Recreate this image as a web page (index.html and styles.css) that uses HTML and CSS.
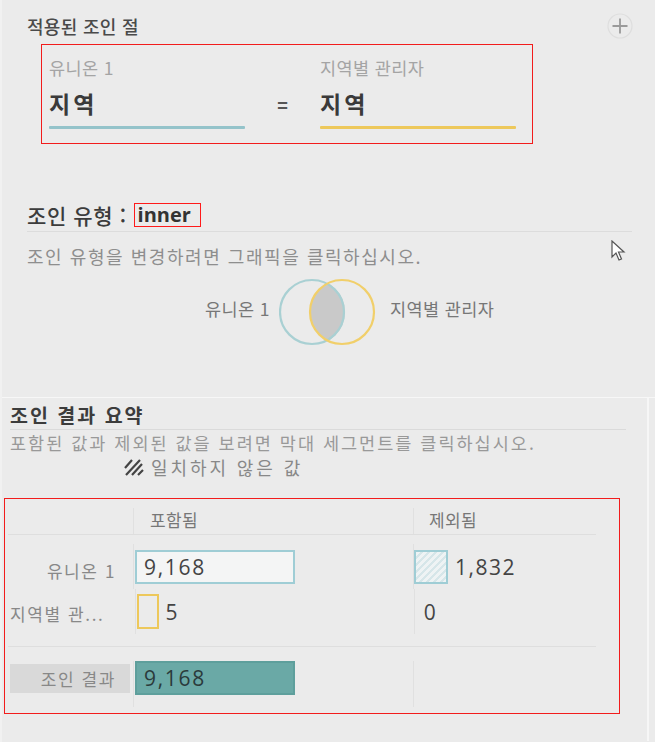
FILE: index.html
```html
<!DOCTYPE html>
<html lang="ko">
<head>
<meta charset="utf-8">
<link rel="stylesheet" href="styles.css">
</head>
<body>
<div class="page">
  <section class="top">
    <div class="title-row">
      <h1 class="title">적용된 조인 절</h1>
      <svg class="plus" width="26" height="26" viewBox="0 0 26 26"><circle cx="13" cy="13" r="12" fill="none" stroke="#dedede" stroke-width="1.2"/><path d="M13 5.5v15M5.5 13h15" stroke="#9a9a9a" stroke-width="1.8"/></svg>
    </div>
    <div class="clause">
      <div class="field">
        <div class="field-src">유니온 1</div>
        <div class="field-name">지역</div>
        <div class="field-line blue"></div>
      </div>
      <div class="eq">=</div>
      <div class="field">
        <div class="field-src">지역별 관리자</div>
        <div class="field-name">지역</div>
        <div class="field-line yellow"></div>
      </div>
    </div>
    <h2 class="jt"><span class="jt-label">조인 유형 :</span><span class="inner">inner</span></h2>
    <p class="hint">조인 유형을 변경하려면 그래픽을 클릭하십시오.</p>
    <div class="venn">
      <span class="venn-l">유니온 1</span>
      <svg width="100" height="70" viewBox="0 0 100 70">
        <defs><clipPath id="cl"><circle cx="33" cy="35" r="33"/></clipPath></defs>
        <circle cx="63" cy="35" r="32" fill="#c9c9c9" clip-path="url(#cl)"/>
        <circle cx="33" cy="35" r="32" fill="none" stroke="#a9d0d3" stroke-width="2.2"/>
        <circle cx="63" cy="35" r="32" fill="none" stroke="#f1cf6a" stroke-width="2.2"/>
      </svg>
      <span class="venn-r">지역별 관리자</span>
    </div>
    <svg class="cursor c1" width="16" height="22" viewBox="0 0 16 22"><path d="M1 1v16l4-4 3 7 2.5-1-3-7h5.5z" fill="#fff" stroke="#555" stroke-width="1.2"/></svg>
  </section>
  <section class="bottom">
    <h2 class="sum">조인 결과 요약</h2>
    <p class="hint2">포함된 값과 제외된 값을 보려면 막대 세그먼트를 클릭하십시오.</p>
    <div class="legend">
      <svg width="20" height="18" viewBox="0 0 20 18"><path d="M1 10l7-8M2 17l14-15M8 17l10-11M14 17l5-5" stroke="#444" stroke-width="2.2"/></svg>
      <span>일치하지 않은 값</span>
    </div>
    <div class="table">
      <div class="thead">
        <div class="c-lab"></div>
        <div class="c-inc">포함됨</div>
        <div class="c-exc">제외됨</div>
      </div>
      <div class="tbody">
        <div class="row">
          <div class="c-lab lab">유니온 1</div>
          <div class="c-inc"><div class="bar bar-blue">9,168</div></div>
          <div class="c-exc"><div class="sq hatch"></div><span class="num">1,832</span></div>
        </div>
        <div class="row">
          <div class="c-lab lab lab-left">지역별 관...</div>
          <div class="c-inc"><div class="sq-y"></div><span class="num">5</span></div>
          <div class="c-exc"><span class="num zero">0</span></div>
        </div>
      </div>
      <div class="tfoot">
        <div class="c-lab"><div class="res-lab">조인 결과</div></div>
        <div class="c-inc"><div class="bar bar-teal">9,168</div></div>
        <div class="c-exc"></div>
      </div>
    </div>
    <svg class="cursor c2" width="22" height="30" viewBox="0 0 16 22"><path d="M1 1v16l4-4 3 7 2.5-1-3-7h5.5z" fill="#fff" stroke="#333" stroke-width="1.3"/></svg>
    <svg class="cursor c3" width="13" height="17" viewBox="0 0 16 22"><path d="M1 1v16l4-4 3 7 2.5-1-3-7h5.5z" fill="#fff" stroke="#666" stroke-width="1.3"/></svg>
  </section>
</div>
</body>
</html>
```
FILE: styles.css
```css
* { box-sizing: border-box; }
html, body { margin: 0; padding: 0; }
body {
  background: #ebebeb;
  font-family: "Noto Sans CJK KR", "Noto Sans", sans-serif;
  color: #444;
  overflow: hidden;
}
.page { position: relative; width: 655px; height: 742px; overflow: hidden; border-left: 2px solid #f1f1f1; }
.top { position: relative; height: 398px; padding: 12px 22px 0 25px; border-bottom: 1px solid #f7f7f7; }
.title-row { display: flex; justify-content: space-between; align-items: center; height: 28px; }
.title { margin: 0; font-size: 18px; line-height: 26px; font-weight: 500; color: #4a4a4a; letter-spacing: 0.3px; }
.clause {
  margin: 4px 0 0 14px;
  width: 492px;
  height: 100px;
  border: 1px solid #f21c1c;
  display: flex;
  padding: 11px 0 0 7px;
}
.field { width: 196px; }
.field-src { font-size: 17.5px; line-height: 24px; color: #a4a4a4; letter-spacing: 0.4px; }
.field-name { margin-top: 9px; font-size: 23px; line-height: 28px; font-weight: 700; color: #3a3a3a; letter-spacing: 3px; }
.field-line { margin-top: 9px; height: 3px; border-radius: 1px; }
.blue { background: #94c3ca; }
.yellow { background: #edc85b; }
.eq { width: 75px; text-align: center; padding-top: 36px; font-size: 18px; line-height: 24px; font-weight: 700; color: #555; }
.jt { margin: 58px 0 0 0; font-size: 21px; line-height: 26px; font-weight: 500; color: #3c3c3c; padding-bottom: 3px; border-bottom: 1px solid #dcdcdc; width: 605px; display: flex; align-items: center; }
.jt-label { letter-spacing: 0.6px; }
.inner { display: inline-block; height: 24px; line-height: 21px; border: 1px solid #ff1a1a; padding: 0 9px 0 3px; font-family: "Open Sans", sans-serif; font-weight: 700; color: #333; margin-left: 7px; font-size: 20px; }
.hint { margin: 13px 0 0; font-size: 18px; line-height: 22px; color: #8e8e8e; letter-spacing: 1.55px; }
.venn { display: flex; align-items: center; margin: 10px 0 0 178px; }
.venn svg { margin: 0 11px 0 9px; }
.venn-l, .venn-r { font-size: 17.5px; color: #777; margin-top: -8px; letter-spacing: 0.4px; }
.cursor { position: absolute; }
.c1 { left: 609px; top: 240px; }
.c2 { left: 514px; top: 565px; }
.c3 { left: 332px; top: 712px; }
.bottom { position: relative; height: 343px; padding: 6px 0 0 8px; border-right: 2px solid #f6f6f6; width: 647px; }
.sum { margin: 0; font-size: 19.5px; line-height: 22px; font-weight: 700; color: #3c3c3c; width: 616px; border-bottom: 1px solid #dadada; padding-bottom: 3px; letter-spacing: 2px; }
.hint2 { margin: 3px 0 0; font-size: 17.5px; line-height: 20px; color: #999; letter-spacing: 2px; white-space: nowrap; }
.legend { display: flex; align-items: center; gap: 7px; margin: 4px 0 0 114px; font-size: 18px; line-height: 20px; color: #888; letter-spacing: 2.9px; }
.table { margin: 21px 0 0 -6px; width: 616px; height: 216px; border: 1px solid #f21c1c; padding: 9px 0 0 3px; }
.thead, .row, .tfoot { display: flex; }
.c-lab { width: 125px; }
.c-inc { width: 280px; padding-left: 1px; border-left: 1px solid #e0e0e0; display: flex; align-items: center; }
.c-exc { width: 183px; border-left: 1px solid #e0e0e0; display: flex; align-items: center; }
.thead { height: 27px; border-bottom: 1px solid #dedede; width: 588px; }
.thead .c-inc, .thead .c-exc { font-size: 17px; line-height: 22px; color: #777; align-items: flex-start; padding-top: 1px; letter-spacing: 0.3px; }
.thead .c-inc { padding-left: 16px; }
.thead .c-exc { padding-left: 15px; }
.tbody { border-bottom: 1px solid #dedede; width: 588px; padding: 9px 0 12px; }
.row { height: 45px; }
.lab { font-size: 17px; color: #888; letter-spacing: 1.6px; display: flex; align-items: center; justify-content: flex-end; padding: 8px 17px 0 0; white-space: nowrap; }
.lab-left { justify-content: flex-start; letter-spacing: 1.6px; margin-left: 2px; padding: 4px 0 0 0; }
.bar { width: 160px; height: 34px; border: 2px solid; display: flex; align-items: center; padding-left: 7px; font-family: "Open Sans", sans-serif; font-size: 21px; letter-spacing: 1.7px; color: #444; }
.bar-blue { border-color: #9fcdd5; background: #f4f5f5; }
.bar-teal { border-color: #5e9f9c; background: #6aa9a6; color: #2b3b3b; }
.sq { width: 34px; height: 34px; border: 2px solid #9fcdd5; margin-right: 7px; }
.hatch { background: repeating-linear-gradient(135deg, #eef3f4 0 3px, #d6e6e9 3px 5px); }
.sq-y { width: 22px; height: 35px; border: 2px solid #edc85b; margin-right: 7px; }
.num { font-family: "Open Sans", sans-serif; font-size: 21px; letter-spacing: 1.5px; color: #444; }
.zero { margin-left: 9px; }
.tfoot { height: 60px; width: 588px; padding-top: 14px; }
.tfoot .c-inc { align-items: flex-start; }
.res-lab { background: #d9d9d9; height: 29px; width: 120px; margin-left: 2px; margin-top: 3px; font-size: 17px; color: #888; letter-spacing: 1.6px; display: flex; align-items: center; justify-content: flex-end; padding-right: 14px; white-space: nowrap; }
```
